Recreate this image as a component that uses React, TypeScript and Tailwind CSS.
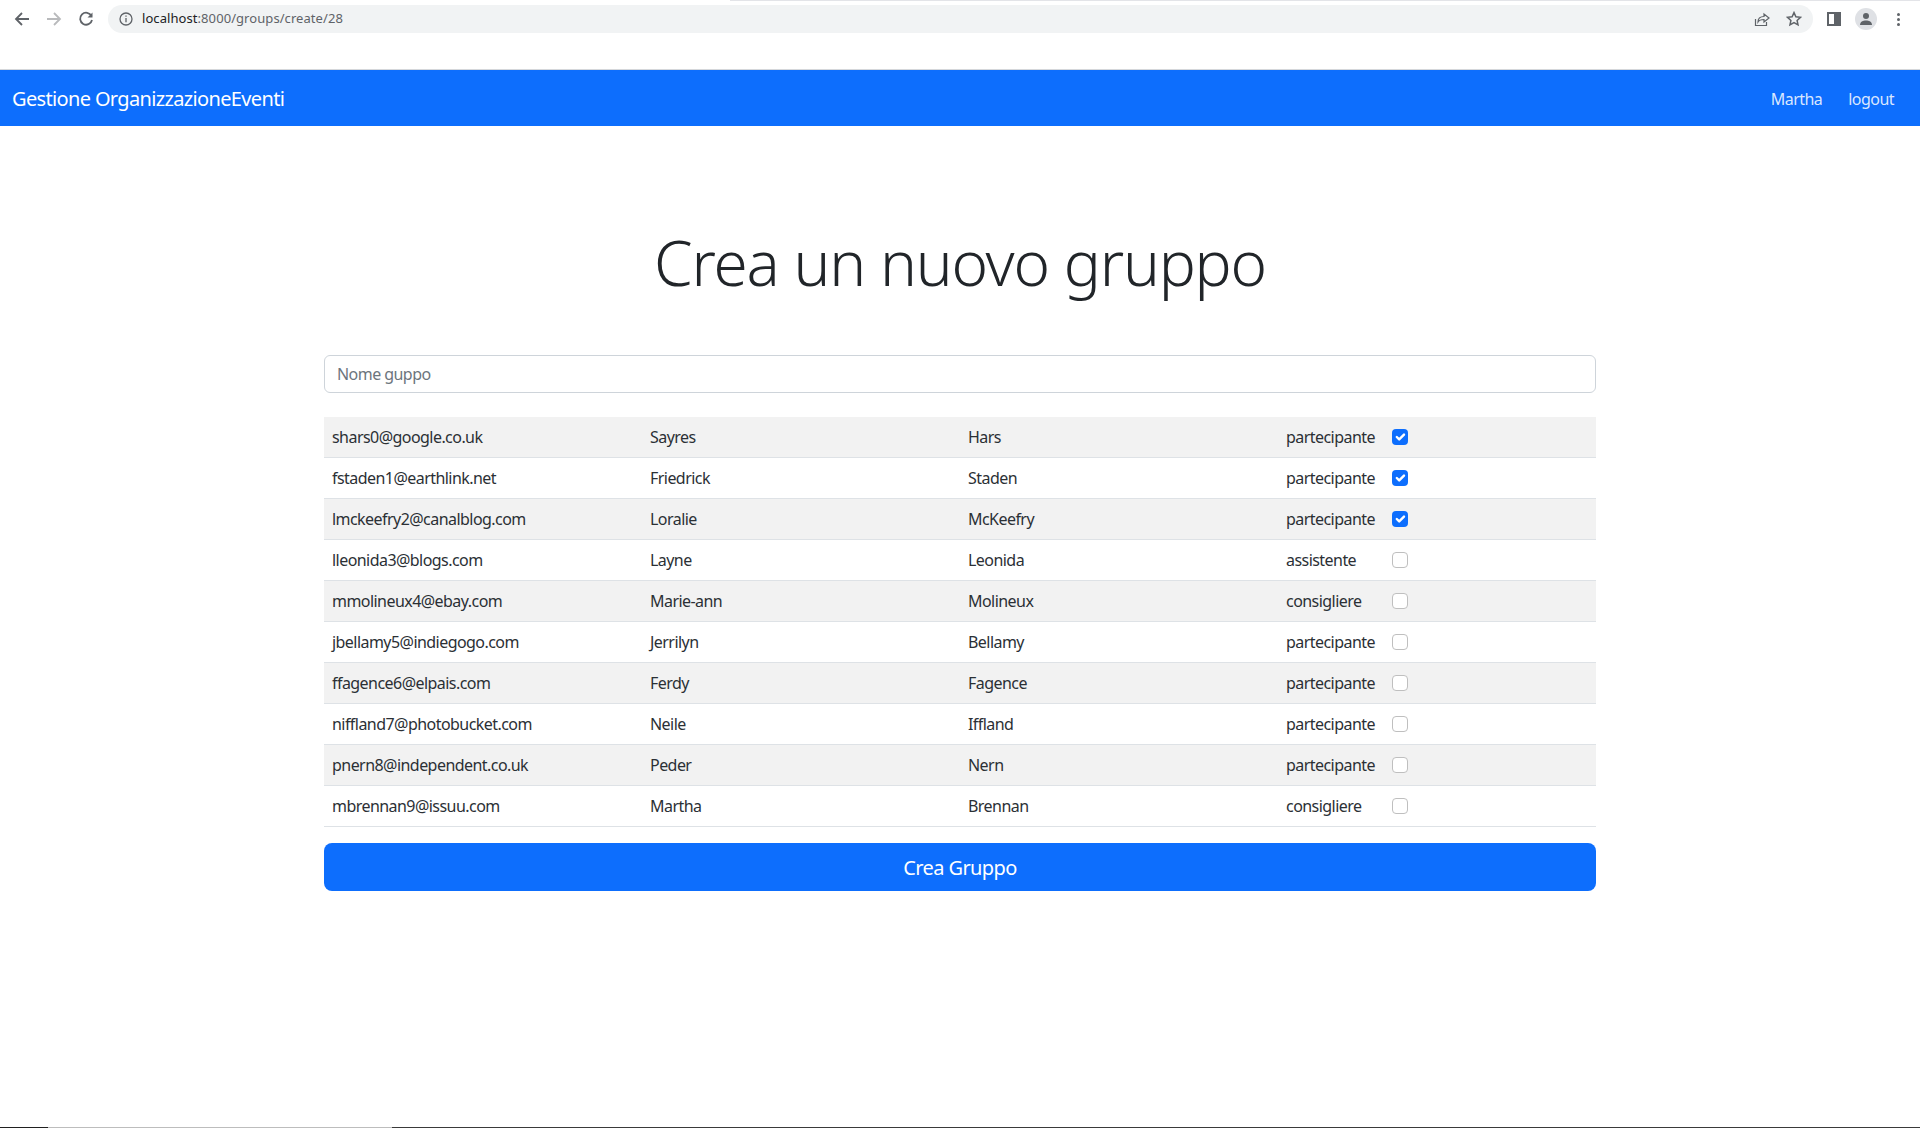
import React from 'react';

// Elenco dei membri selezionabili
const members = [
  { email: 'shars0@google.co.uk', first: 'Sayres', last: 'Hars', role: 'partecipante', checked: true },
  { email: 'fstaden1@earthlink.net', first: 'Friedrick', last: 'Staden', role: 'partecipante', checked: true },
  { email: 'lmckeefry2@canalblog.com', first: 'Loralie', last: 'McKeefry', role: 'partecipante', checked: true },
  { email: 'lleonida3@blogs.com', first: 'Layne', last: 'Leonida', role: 'assistente', checked: false },
  { email: 'mmolineux4@ebay.com', first: 'Marie-ann', last: 'Molineux', role: 'consigliere', checked: false },
  { email: 'jbellamy5@indiegogo.com', first: 'Jerrilyn', last: 'Bellamy', role: 'partecipante', checked: false },
  { email: 'ffagence6@elpais.com', first: 'Ferdy', last: 'Fagence', role: 'partecipante', checked: false },
  { email: 'niffland7@photobucket.com', first: 'Neile', last: 'Iffland', role: 'partecipante', checked: false },
  { email: 'pnern8@independent.co.uk', first: 'Peder', last: 'Nern', role: 'partecipante', checked: false },
  { email: 'mbrennan9@issuu.com', first: 'Martha', last: 'Brennan', role: 'consigliere', checked: false },
];

const BrowserBar = () => (
  <div className="h-[70px] bg-white border-b border-b-[#d5d7da] relative shrink-0">
    <div className="absolute top-0 left-[730px] right-0 h-px bg-[#e3e4e8]" />
    <div className="flex items-center h-[38px]">
      <svg className="ml-[14px] w-[16px] h-[16px]" viewBox="0 0 16 16" fill="none" stroke="#5f6368" strokeWidth="1.8"><path d="M15 8H2M8 2L2 8l6 6" /></svg>
      <svg className="ml-[16px] w-[16px] h-[16px]" viewBox="0 0 16 16" fill="none" stroke="#b9babc" strokeWidth="1.8"><path d="M1 8h13M8 2l6 6-6 6" /></svg>
      <svg className="ml-[16px] w-[16px] h-[16px]" viewBox="0 0 16 16" fill="none" stroke="#5f6368" strokeWidth="1.8"><path d="M13.5 5A6 6 0 1 0 14 9" /><path d="M14.5 1.500v5h-5" fill="#5f6368" stroke="none" /></svg>
      <div className="ml-[14px] w-[1705px] h-[28px] rounded-full bg-[#f1f3f4] flex items-center">
        <svg className="ml-[11px] w-[14px] h-[14px]" viewBox="0 0 14 14" fill="none" stroke="#5f6368" strokeWidth="1.3"><circle cx="7" cy="7" r="6" /><path d="M7 6v4.200M7 3.400v1.400" /></svg>
        <span className="ml-[9px] text-[13px] text-[#5f6368] tracking-[0.07px]"><span className="text-[#202124]">localhost</span>:8000/groups/create/28</span>
        <svg className="ml-auto w-[16px] h-[16px]" viewBox="0 0 16 16" fill="none" stroke="#5f6368" strokeWidth="1.2"><path d="M1.500 8v6.500h11V11" /><path d="M4 11c0-4 3-5.500 6-5.500V3l5 4-5 4V8.500c-3 0-5 .8-6 2.500z" /></svg>
        <svg className="ml-[16px] mr-[11px] w-[16px] h-[16px]" viewBox="0 0 16 16" fill="none" stroke="#5f6368" strokeWidth="1.500"><path d="M8 1.600l1.900 4.200 4.600.5-3.400 3.100.9 4.500-4-2.300-4 2.300.9-4.500L1.500 6.300l4.600-.5z" /></svg>
      </div>
      <div className="ml-[14px] w-[14px] h-[14px] border-[2px] border-[#5f6368] border-r-[7px]" />
      <div className="ml-[14px] w-[22px] h-[22px] rounded-full bg-[#dfe1e5] flex items-center justify-center">
        <svg className="w-[14px] h-[14px]" viewBox="0 0 14 14" fill="#5f6368"><circle cx="7" cy="4" r="3" /><path d="M1 13c0-3.500 3-4.600 6-4.600s6 1.100 6 4.600z" /></svg>
      </div>
      <div className="ml-[20px] flex flex-col gap-[2px]">
        <span className="w-[3px] h-[3px] rounded-full bg-[#5f6368]" />
        <span className="w-[3px] h-[3px] rounded-full bg-[#5f6368]" />
        <span className="w-[3px] h-[3px] rounded-full bg-[#5f6368]" />
      </div>
    </div>
  </div>
);

const Navbar = () => (
  <nav className="h-[56px] bg-[#0d6efd] flex items-center justify-between text-white pl-[12px] pr-[26px] pt-[1px]">
    <span className="text-[20px] tracking-[-0.65px]">Gestione OrganizzazioneEventi</span>
    <div className="flex gap-[26px] text-[rgba(255,255,255,0.85)] tracking-[-0.55px]">
      <span>Martha</span>
      <span>logout</span>
    </div>
  </nav>
);

const MemberRow = ({ member, striped }: { member: (typeof members)[number]; striped: boolean }) => (
  <div className={`grid grid-cols-4 h-[41px] items-center border-b border-[#dee2e6] text-[#2b3035] ${striped ? 'bg-[#f2f2f2]' : 'bg-white'}`}>
    <span className="pl-[8px]">{member.email}</span>
    <span className="pl-[8px]">{member.first}</span>
    <span className="pl-[8px]">{member.last}</span>
    <div className="pl-[8px] flex items-center">
      <span className="w-[106px]">{member.role}</span>
      {member.checked ? (
        <span className="w-[16px] h-[16px] rounded-[4px] bg-[#0d6efd] flex items-center justify-center">
          <svg className="w-[16px] h-[16px]" viewBox="0 0 20 20" fill="none" stroke="#fff" strokeWidth="3" strokeLinecap="round" strokeLinejoin="round"><path d="M6 10l3 3 6-6" /></svg>
        </span>
      ) : (
        <span className="w-[16px] h-[16px] rounded-[4px] bg-white border border-[#bfbfbf]" />
      )}
    </div>
  </div>
);

export default function App() {
  return (
    <div className="min-h-[1128px] bg-white flex flex-col font-['Noto_Sans',sans-serif] text-[16px] tracking-[-0.55px] relative">
      <BrowserBar />
      <Navbar />
      <main className="w-[1272px] ml-[324px]">
        <h1 className="mt-[99px] text-center text-[62px] leading-[74px] font-light text-[#212529] tracking-[-1.2px]">Crea un nuovo gruppo</h1>
        <div className="mt-[56px] h-[38px] border border-[#ced4da] rounded-[6px] flex items-center pl-[12px] text-[#6c757d]">Nome guppo</div>
        <div className="mt-[24px]">
          {members.map((member, i) => (
            <MemberRow key={member.email} member={member} striped={i % 2 === 0} />
          ))}
        </div>
        <button className="mt-[16px] w-full h-[48px] pt-[1px] rounded-[8px] bg-[#0d6efd] text-white text-[20px] tracking-[-0.6px]">Crea Gruppo</button>
      </main>
      <div className="absolute bottom-0 left-0 right-0 h-px flex">
        <span className="w-[48px] bg-[#202020]" />
        <span className="w-[344px] bg-[#bdbdbd]" />
        <span className="flex-1 bg-[#3a3a3a]" />
      </div>
    </div>
  );
}
